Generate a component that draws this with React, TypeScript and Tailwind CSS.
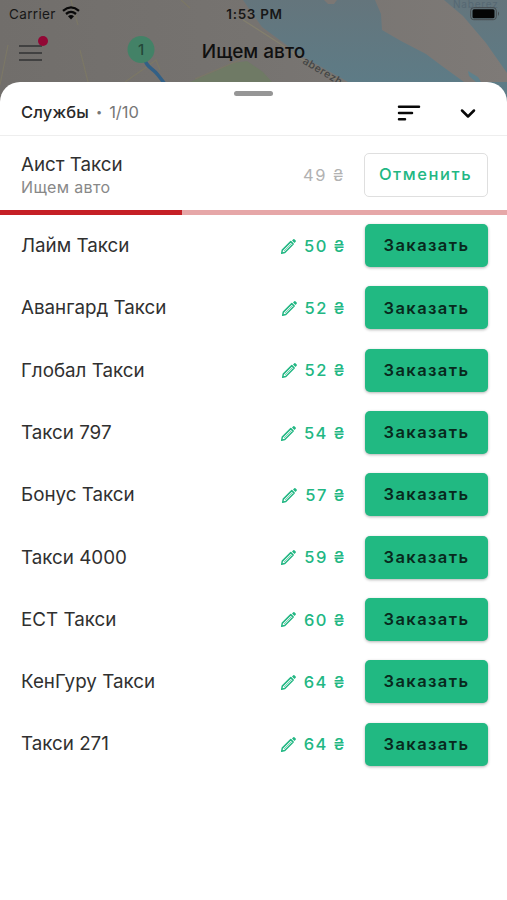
import React from "react";

const services = [
  { name: "Лайм Такси", price: 50 },
  { name: "Авангард Такси", price: 52 },
  { name: "Глобал Такси", price: 52 },
  { name: "Такси 797", price: 54 },
  { name: "Бонус Такси", price: 57 },
  { name: "Такси 4000", price: 59 },
  { name: "ЕСТ Такси", price: 60 },
  { name: "КенГуру Такси", price: 64 },
  { name: "Такси 271", price: 64 },
];

function MapBackdrop() {
  return (
    <svg className="absolute inset-0" width="507" height="110" viewBox="0 0 507 110" fill="none">
      <defs>
        <linearGradient id="water" x1="0" y1="0" x2="0" y2="90" gradientUnits="userSpaceOnUse">
          <stop stopColor="#64757c" />
          <stop offset="1" stopColor="#5d7c87" />
        </linearGradient>
        <linearGradient id="land" x1="0" y1="0" x2="507" y2="0" gradientUnits="userSpaceOnUse">
          <stop stopColor="#716e6b" />
          <stop offset=".5" stopColor="#767370" />
          <stop offset="1" stopColor="#7e7a77" />
        </linearGradient>
      </defs>
      <rect width="507" height="110" fill="url(#land)" />
      <path d="M243 0H507V110H380L348 82L300 55L262 27L252 13Z" fill="url(#water)" />
      <path d="M324 0H337L334 4H328Z" fill="#7b7774" />
      <path d="M375 0L381 14L382 30L401 41L426 54L442 66L464 82H507V73L486 43L463 16L444 0Z" fill="url(#land)" />
      <path d="M468 71L478 77L481 82H476L469 76Z" fill="#5f808b" />
      <path d="M190 82L218 70L233 63L247 61L263 72L272 82Z" fill="#6f7a65" />
      <path d="M243 20L279 43L310 65L342 82" stroke="#837f6d" strokeWidth="1.2" />
      <path d="M8 45L0 85M80 50L88 82M71 0L78 25M125 82L145 68L156 60L160 70M195 79L247 57M181 0L190 8" stroke="#7b7766" strokeWidth="1.2" />
      <path d="M145 60C147 68 153 68 158 75L165 84" stroke="#326086" strokeWidth="3.5" />
      <circle cx="141" cy="49.500" r="13.500" fill="#438267" />
      <text x="141" y="55" textAnchor="middle" className="font-['Inter'] text-[15px] font-medium" fill="#24483a">1</text>
      <text transform="translate(302 63) rotate(31)" className="font-['Inter'] text-[10.500px] font-medium tracking-[0.5px]" fill="#414445">aberezh</text>
      <text x="453" y="8" className="font-['Inter'] text-[10px] tracking-[0.8px]" fill="#566873">Naberez</text>
    </svg>
  );
}

function StatusBar() {
  return (
    <div className="relative grid h-7 grid-cols-[1fr_auto_1fr] items-center pr-[7px] pl-[9px] text-[13.500px] text-[#171717]">
      <div className="flex items-center gap-[6px]">
        <span className="tracking-[0.350px]">Carrier</span>
        <svg className="-mt-[2px]" width="18" height="14" viewBox="0 0 18 14" fill="none" stroke="#090909" strokeWidth="2.300">
          <path d="M1 4.800Q9 -2 17 4.800" />
          <path d="M4 8Q9 3.800 14 8" />
          <path d="M6 10.300Q9 7.700 12 10.300L9 13.500Z" fill="#090909" stroke="none" />
        </svg>
      </div>
      <span className="font-semibold tracking-[0.700px]">1:53 PM</span>
      <svg className="-mt-[1px] justify-self-end" width="30" height="14" viewBox="0 0 30 14" fill="none">
        <rect x=".7" y=".7" width="25.600" height="12" rx="3" stroke="#454b4e" />
        <rect x="2.500" y="2.200" width="22" height="9" rx="1.500" fill="#050505" />
        <path d="M28 4.500Q30 6.700 28 9Z" fill="#454b4e" />
      </svg>
    </div>
  );
}

function PencilIcon() {
  return (
    <svg width="17" height="17" viewBox="0 0 17 17" fill="none" stroke="#22b783" strokeWidth="1.500" strokeLinejoin="round">
      <path d="M1.700 15.300L2.300 12.100L10.800 3.600L13.200 6L4.800 14.500Z" />
      <path d="M4 13L11.500 5.500" strokeWidth="0.600" />
      <path d="M12 2.500L13.300 1.200Q13.900 .8 14.400 1.300L15.700 2.600Q16.200 3.100 15.700 3.700L14.400 5Z" fill="#22b783" stroke="none" />
    </svg>
  );
}

function ServiceRow({ name, price }: { name: string; price: number }) {
  return (
    <div className="flex h-[62.300px] items-center pr-[19px] pl-[21px]">
      <span className="flex-1 pt-px text-[18.800px] text-[#303030]">{name}</span>
      <button className="mr-[19px] flex items-center gap-[7px] pt-px text-[16.500px] font-medium tracking-[1.400px] text-[#22b783]">
        <PencilIcon />
        <span>{price} ₴</span>
      </button>
      <button className="h-[43px] w-[123px] rounded-[5px] bg-[#21b982] text-[16.500px] font-semibold tracking-[1.400px] text-[#08291d] shadow-[0_1px_3px_rgba(0,0,0,0.300)]">
        Заказать
      </button>
    </div>
  );
}

export default function App() {
  return (
    <div className="relative h-[900px] w-[507px] overflow-hidden bg-white font-['Inter','Liberation_Sans',sans-serif]">
      <MapBackdrop />
      <StatusBar />
      <header className="relative grid h-[54px] grid-cols-[1fr_auto_1fr] items-center pb-[5px] pl-[19px]">
        <div className="relative h-4 w-[23px]">
          <div className="flex h-full flex-col justify-between">
            <span className="h-[2px] bg-[#414141]" />
            <span className="h-[2px] bg-[#414141]" />
            <span className="h-[2px] bg-[#414141]" />
          </div>
          <span className="absolute -top-[9px] -right-[6px] size-[10px] rounded-full bg-[#920735]" />
        </div>
        <h1 className="pr-[19px] text-[19px] font-medium text-[#101010]">Ищем авто</h1>
      </header>

      <main className="relative h-[818px] rounded-t-[20px] bg-white">
        <div className="flex h-[54px] flex-col border-b border-[#eeeeee]">
          <div className="mt-[9px] h-[5px] w-[39px] self-center rounded-full bg-[#969696]" />
          <div className="flex h-[33px] items-center pr-[30px] pl-[21px]">
            <div className="flex flex-1 items-center gap-[7px] text-[16.500px]">
              <h2 className="font-medium tracking-[0.150px] text-[#292929]">Службы</h2>
              <span className="text-[11px] text-[#777777]">•</span>
              <span className="text-[#777777]">1/10</span>
            </div>
            <svg className="mr-[38px]" width="24" height="18" viewBox="0 0 24 18" stroke="#080808" strokeWidth="2.500" strokeLinecap="round">
              <path d="M2 2.800H22M2 9H15M2 15.200H8" />
            </svg>
            <svg width="18" height="18" viewBox="0 0 18 18" fill="none" stroke="#080808" strokeWidth="2.500" strokeLinecap="round" strokeLinejoin="round">
              <path d="M3 6.500L9 12.500L15 6.500" />
            </svg>
          </div>
        </div>

        <section>
          <div className="flex h-[73.500px] items-center pt-[4px] pr-[19px] pl-[21px]">
            <div className="flex flex-1 flex-col">
              <span className="text-[18.800px] leading-[24px] text-[#303030]">Аист Такси</span>
              <span className="text-[16px] leading-[20px] tracking-[0.350px] text-[#888888]">Ищем авто</span>
            </div>
            <span className="mr-[19px] pt-px text-[16.500px] tracking-[1.500px] text-[#b2b2b2]">49 ₴</span>
            <button className="h-[44px] w-[124px] rounded-[5px] border border-[#dfdfdf] pr-px text-[16.500px] font-medium tracking-[1.550px] text-[#22b783]">
              Отменить
            </button>
          </div>
          <div className="h-[5px] bg-[#e6a7a8]">
            <div className="h-full w-[182px] bg-[#c52026]" />
          </div>
        </section>

        {services.map((service) => (
          <ServiceRow key={service.name} {...service} />
        ))}
      </main>
    </div>
  );
}
